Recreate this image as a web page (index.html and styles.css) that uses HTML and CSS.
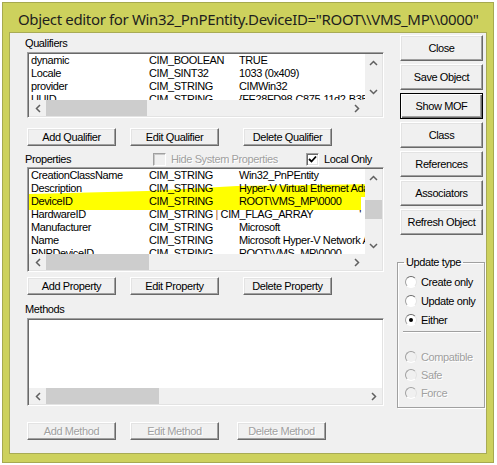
FILE: index.html
```html
<!DOCTYPE html>
<html>
<head>
	<meta charset="UTF-8">
	<title>Object editor</title>
	<link rel="stylesheet" href="styles.css">
</head>
<body>
<div class="window">
	<div class="titlebar">Object editor for Win32_PnPEntity.DeviceID="ROOT\\VMS_MP\\0000"</div>
	<div class="client">
		<div class="left">
			<div class="label">Qualifiers</div>
			<div class="list qual">
				<div class="list-body">
					<div class="rows">
						<div class="row"><span class="c1">dynamic</span><span class="c2">CIM_BOOLEAN</span><span class="c3">TRUE</span></div>
						<div class="row"><span class="c1">Locale</span><span class="c2">CIM_SINT32</span><span class="c3">1033 (0x409)</span></div>
						<div class="row"><span class="c1">provider</span><span class="c2">CIM_STRING</span><span class="c3">CIMWin32</span></div>
						<div class="row"><span class="c1">UUID</span><span class="c2">CIM_STRING</span><span class="c3">{FE28FD98-C875-11d2-B352-00104BC97924}</span></div>
					</div>
					<div class="vscroll">
						<div class="arrow"><svg width="9" height="6"><path d="M1 5 L4.5 1.5 L8 5" fill="none" stroke="#606060" stroke-width="1.5"/></svg></div>
						<div class="track"></div>
						<div class="arrow"><svg width="9" height="6"><path d="M1 1 L4.5 4.5 L8 1" fill="none" stroke="#606060" stroke-width="1.5"/></svg></div>
					</div>
				</div>
				<div class="hscroll">
					<div class="arrow"><svg width="6" height="9"><path d="M5 1 L1.5 4.5 L5 8" fill="none" stroke="#606060" stroke-width="1.5"/></svg></div>
					<div class="track"><div class="thumb" style="width:101px"></div></div>
					<div class="arrow"><svg width="6" height="9"><path d="M1 1 L4.5 4.5 L1 8" fill="none" stroke="#606060" stroke-width="1.5"/></svg></div>
					<div class="corner"></div>
				</div>
			</div>
			<div class="buttons">
				<button class="btn">Add Qualifier</button>
				<button class="btn second">Edit Qualifier</button>
				<button class="btn third">Delete Qualifier</button>
			</div>

			<div class="prop-head">
				<span class="label prop-label">Properties</span>
				<span class="check disabled hide-sys"><span class="box"></span>Hide System Properties</span>
				<span class="check local"><span class="box on"><svg width="9" height="9"><path d="M1 4 L3.5 6.5 L8 1.5" fill="none" stroke="#000" stroke-width="1.8"/></svg></span>Local Only</span>
			</div>
			<div class="list props">
				<div class="list-body">
					<div class="rows">
						<svg class="marker" width="356" height="50"><polygon points="0,25 120,22 210,17 356,15 356,28 334,28 334,41 200,41 0,41" fill="#ffff00"/></svg>
						<div class="row"><span class="c1">CreationClassName</span><span class="c2">CIM_STRING</span><span class="c3">Win32_PnPEntity</span></div>
						<div class="row"><span class="c1">Description</span><span class="c2">CIM_STRING</span><span class="c3">Hyper-V Virtual Ethernet Adapter</span></div>
						<div class="row"><span class="c1">DeviceID</span><span class="c2">CIM_STRING</span><span class="c3">ROOT\VMS_MP\0000</span></div>
						<div class="row"><span class="c1">HardwareID</span><span class="c2 wide">CIM_STRING <span class="pipe">|</span> CIM_FLAG_ARRAY</span><span class="c3 tick">'</span></div>
						<div class="row"><span class="c1">Manufacturer</span><span class="c2">CIM_STRING</span><span class="c3">Microsoft</span></div>
						<div class="row"><span class="c1">Name</span><span class="c2">CIM_STRING</span><span class="c3">Microsoft Hyper-V Network Adapter</span></div>
						<div class="row"><span class="c1">PNPDeviceID</span><span class="c2">CIM_STRING</span><span class="c3">ROOT\VMS_MP\0000</span></div>
					</div>
					<div class="vscroll">
						<div class="arrow"><svg width="9" height="6"><path d="M1 5 L4.5 1.5 L8 5" fill="none" stroke="#606060" stroke-width="1.5"/></svg></div>
						<div class="track"><div class="vthumb"></div></div>
						<div class="arrow"><svg width="9" height="6"><path d="M1 1 L4.5 4.5 L8 1" fill="none" stroke="#606060" stroke-width="1.5"/></svg></div>
					</div>
				</div>
				<div class="hscroll">
					<div class="arrow"><svg width="6" height="9"><path d="M5 1 L1.5 4.5 L5 8" fill="none" stroke="#606060" stroke-width="1.5"/></svg></div>
					<div class="track"><div class="thumb" style="width:103px"></div></div>
					<div class="arrow"><svg width="6" height="9"><path d="M1 1 L4.5 4.5 L1 8" fill="none" stroke="#606060" stroke-width="1.5"/></svg></div>
					<div class="corner"></div>
				</div>
			</div>
			<div class="buttons prop-buttons">
				<button class="btn">Add Property</button>
				<button class="btn second">Edit Property</button>
				<button class="btn third">Delete Property</button>
			</div>

			<div class="label methods-label">Methods</div>
			<div class="list methods">
				<div class="list-body">
					<div class="rows"></div>
				</div>
				<div class="hscroll">
					<div class="arrow"><svg width="6" height="9"><path d="M5 1 L1.5 4.5 L5 8" fill="none" stroke="#606060" stroke-width="1.5"/></svg></div>
					<div class="track"><div class="thumb" style="width:113px"></div></div>
					<div class="arrow"><svg width="6" height="9"><path d="M1 1 L4.5 4.5 L1 8" fill="none" stroke="#606060" stroke-width="1.5"/></svg></div>
				</div>
			</div>
			<div class="buttons method-buttons">
				<button class="btn" disabled>Add Method</button>
				<button class="btn second" disabled>Edit Method</button>
				<button class="btn third" disabled>Delete Method</button>
			</div>
		</div>

		<div class="right">
			<button class="btn side">Close</button>
			<button class="btn side">Save Object</button>
			<button class="btn side default">Show MOF</button>
			<button class="btn side">Class</button>
			<button class="btn side">References</button>
			<button class="btn side">Associators</button>
			<button class="btn side">Refresh Object</button>

			<fieldset class="group">
				<legend>Update type</legend>
				<div class="radio"><span class="dot"></span>Create only</div>
				<div class="radio"><span class="dot"></span>Update only</div>
				<div class="radio"><span class="dot on"></span>Either</div>
				<div class="sep"></div>
				<div class="radio off first-off"><span class="dot"></span>Compatible</div>
				<div class="radio off"><span class="dot"></span>Safe</div>
				<div class="radio off"><span class="dot"></span>Force</div>
			</fieldset>
		</div>
	</div>
</div>
</body>
</html>
```

FILE: styles.css
```css
body{
	margin:0;
	background:#fff;
	font-family:"Liberation Sans", Arial, sans-serif;
	font-size:11px;
	letter-spacing:-0.4px;
	color:#000;
}
.window{
	margin:2px 0 0 2px;
	width:490px;
	height:459px;
	border:1px solid #a6a94f;
	background:#cdd15d;
	display:flex;
	flex-direction:column;
}
.titlebar{
	height:26px;
	padding:3px 0 0 15px;
	display:flex;
	align-items:center;
	font-family:"Noto Sans", "Liberation Sans", sans-serif;
	font-size:15px;
	letter-spacing:-0.35px;
	color:#1e1e1e;
	white-space:nowrap;
	overflow:hidden;
}
.client{
	flex:1;
	margin:0 6px 8px 6px;
	border:1px solid #a8ab55;
	background:#f0f0f0;
	display:flex;
}
.left{
	width:372px;
	padding:4px 0 0 15px;
	display:flex;
	flex-direction:column;
}
.label{
	height:13px;
	line-height:13px;
	white-space:nowrap;
}

/* list boxes */
.list{
	margin:2px 0 0 2px;
	width:353px;
	border:1px solid;
	border-color:#a0a0a0 #fff #fff #a0a0a0;
	box-shadow:inset 1px 1px #696969, inset -1px -1px #e3e3e3;
	padding:1px;
	background:#fff;
	display:flex;
	flex-direction:column;
}
.list.qual{ height:62px; }
.list.props{ margin-top:0; height:101px; }
.list.methods{ height:84px; }
.list-body{
	flex:1;
	display:flex;
	min-height:0;
}
.rows{
	position:relative;
	flex:1;
	overflow:hidden;
	padding-left:2px;
}
.row{
	position:relative;
	height:13px;
	line-height:13px;
	white-space:nowrap;
	display:flex;
}
.c1{ width:118px; flex:none; }
.c2{ width:90px; flex:none; }
.c2.wide{ width:auto; }
.c3{ flex:none; }
.pipe{ color:#b0601c; }
.tick{ margin-left:46px; }
.marker{
	position:absolute;
	left:-2px;
	top:0;
}

/* scrollbars */
.vscroll{
	width:17px;
	background:#f0f0f0;
	display:flex;
	flex-direction:column;
}
.vscroll .arrow{
	height:17px;
	display:flex;
	align-items:center;
	justify-content:center;
}
.vscroll .track{
	flex:1;
	position:relative;
}
.vthumb{
	margin-top:14px;
	height:19px;
	background:#cdcdcd;
}
.hscroll{
	height:16px;
	background:#f0f0f0;
	display:flex;
}
.hscroll .arrow{
	width:17px;
	display:flex;
	align-items:center;
	justify-content:center;
}
.hscroll .track{
	flex:1;
	display:flex;
}
.thumb{
	background:#cdcdcd;
}
.hscroll .corner{
	width:17px;
}

/* buttons */
.btn{
	height:18px;
	width:89px;
	padding:0;
	font-family:"Liberation Sans", Arial, sans-serif;
	font-size:11px;
	letter-spacing:-0.4px;
	color:#000;
	background:#f0f0f0;
	border:1px solid;
	border-color:#fff #696969 #696969 #fff;
	box-shadow:inset -1px -1px #a0a0a0, inset 1px 1px #e3e3e3;
	white-space:nowrap;
}
.btn:disabled{
	color:#a0a0a0;
	text-shadow:1px 1px #fff;
}
.buttons{
	display:flex;
	margin:10px 0 0 2px;
}
.buttons .second{ margin-left:14px; }
.buttons .third{ margin-left:24px; }
.prop-buttons{ margin-top:5px; }
.method-buttons{ margin-top:16px; }
.method-buttons .third{ margin-left:18px; }

.prop-head{
	margin-top:5px;
	height:16px;
	display:flex;
	align-items:center;
	white-space:nowrap;
}
.prop-label{ width:128px; flex:none; }
.check{
	display:flex;
	align-items:center;
}
.check .box{
	width:11px;
	height:11px;
	margin-right:5px;
	border:1px solid;
	border-color:#a0a0a0 #fff #fff #a0a0a0;
	box-shadow:inset 1px 1px #696969, inset -1px -1px #e3e3e3;
	background:#fff;
	display:flex;
	align-items:center;
	justify-content:center;
}
.check.disabled{ color:#a0a0a0; text-shadow:1px 1px #fff; }
.check.disabled .box{ background:#f0f0f0; box-shadow:inset 1px 1px #c8c8c8; }
.hide-sys{ width:153px; flex:none; }

.methods-label{ margin-top:8px; }

/* right column */
.right{
	flex:1;
	padding-top:2px;
	display:flex;
	flex-direction:column;
}
.btn.side{
	width:83px;
	height:26px;
	margin:0 0 3px 3px;
}
.btn.default{
	border-color:#000;
	box-shadow:inset 1px 1px #fff, inset -1px -1px #696969, inset -2px -2px #a0a0a0;
}
.group{
	margin:18px 0 0 0;
	width:88px;
	padding:3px 0 2px 7px;
	border:1px solid #a0a0a0;
	box-shadow:inset 1px 1px #fff, 1px 1px #fff;
	min-width:0;
	box-sizing:border-box;
	height:152px;
}
.group legend{
	padding:0 2px;
	margin-left:-1px;
	line-height:13px;
}
.radio{
	height:19px;
	display:flex;
	align-items:center;
	white-space:nowrap;
}
.radio .dot{
	width:10px;
	height:10px;
	margin-right:4px;
	border-radius:50%;
	border:1px solid;
	border-color:#696969 #e3e3e3 #fff #a0a0a0;
	background:#fff;
	display:flex;
	align-items:center;
	justify-content:center;
}
.radio .dot.on:after{
	content:'';
	width:4px;
	height:4px;
	border-radius:50%;
	background:#000;
}
.sep{
	margin:2px 3px 0 -2px;
	border-top:1px solid #a0a0a0;
	border-bottom:1px solid #fff;
}
.radio.off{
	height:18px;
	color:#a0a0a0;
	text-shadow:1px 1px #fff;
}
.radio.off .dot{ background:#f0f0f0; border-color:#a0a0a0 #e3e3e3 #fff #a0a0a0; }
.first-off{ margin-top:15px; }
```
